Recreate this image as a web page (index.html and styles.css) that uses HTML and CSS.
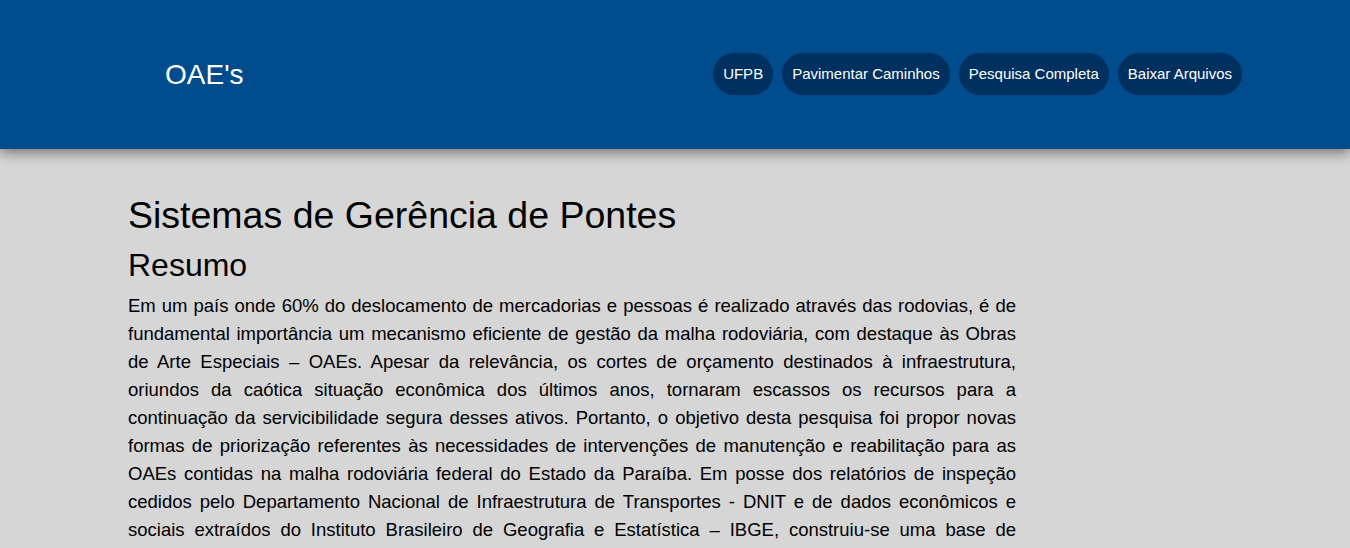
FILE: index.html
```html
<!DOCTYPE html>
<html lang="pt-BR">
<head>
<meta charset="utf-8">
<title>OAE's</title>
<link rel="stylesheet" href="styles.css">
</head>
<body>
<header class="topbar">
  <div class="brand">OAE's</div>
  <nav class="nav">
    <a class="pill" href="#">UFPB</a>
    <a class="pill" href="#">Pavimentar Caminhos</a>
    <a class="pill" href="#">Pesquisa Completa</a>
    <a class="pill" href="#">Baixar Arquivos</a>
  </nav>
</header>
<main class="content">
  <h1 class="title">Sistemas de Gerência de Pontes</h1>
  <h2 class="subtitle">Resumo</h2>
  <p class="abstract">Em um país onde 60% do deslocamento de mercadorias e pessoas é realizado através das rodovias, é de fundamental importância um mecanismo eficiente de gestão da malha rodoviária, com destaque às Obras de Arte Especiais – OAEs. Apesar da relevância, os cortes de orçamento destinados à infraestrutura, oriundos da caótica situação econômica dos últimos anos, tornaram escassos os recursos para a continuação da servicibilidade segura desses ativos. Portanto, o objetivo desta pesquisa foi propor novas formas de priorização referentes às necessidades de intervenções de manutenção e reabilitação para as OAEs contidas na malha rodoviária federal do Estado da Paraíba. Em posse dos relatórios de inspeção cedidos pelo Departamento Nacional de Infraestrutura de Transportes - DNIT e de dados econômicos e sociais extraídos do Instituto Brasileiro de Geografia e Estatística – IBGE, construiu-se uma base de dados&nbsp;georreferenciada, com informações sobre as condições estruturais e funcionais de cada obra, possibilitando a análise de prioridades segundo diferentes critérios técnicos e socioeconômicos.</p>
</main>
</body>
</html>
```

FILE: styles.css
```css
html, body {
  margin: 0;
  padding: 0;
}
body {
  background: #d6d6d6;
  font-family: "Liberation Sans", Arial, sans-serif;
  color: #000;
  overflow: hidden;
}
.topbar {
  height: 149px;
  background: #004c8c;
  box-shadow: 0 4px 12px rgba(0, 0, 0, 0.45);
  display: flex;
  align-items: center;
  justify-content: space-between;
  padding: 0 108px 0 165px;
  box-sizing: border-box;
  position: relative;
}
.brand {
  color: #fff;
  font-size: 28px;
}
.nav {
  display: flex;
  gap: 9px;
  margin-top: -2px;
}
.pill {
  display: flex;
  align-items: center;
  height: 42px;
  padding: 0 10px;
  border-radius: 21px;
  background: #00305f;
  color: #fff;
  font-size: 15px;
  text-decoration: none;
}
.content {
  width: 888px;
  padding: 45px 0 0 128px;
}
.title {
  margin: 0;
  font-size: 37.5px;
  font-weight: normal;
  line-height: 43px;
}
.subtitle {
  margin: 10px 0 0;
  font-size: 32px;
  font-weight: normal;
  line-height: 37px;
}
.abstract {
  margin: 8px 0 0;
  font-size: 18.5px;
  line-height: 28px;
  text-align: justify;
}
```
